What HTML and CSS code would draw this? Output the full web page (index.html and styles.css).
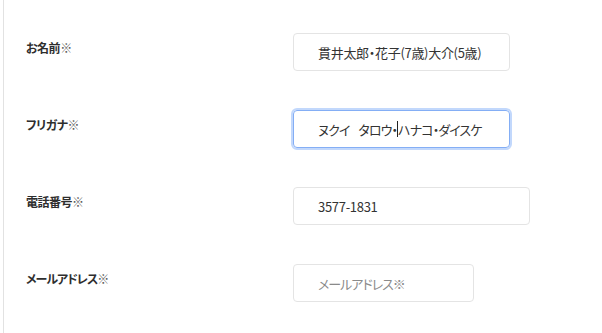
FILE: index.html
```html
<!DOCTYPE html>
<html lang="ja">
<head>
<meta charset="utf-8">
<link rel="stylesheet" href="styles.css">
</head>
<body>
<div class="page">
  <form class="form">
    <div class="row">
      <div class="label">お名前<span class="mark">※</span></div>
      <div class="field w217">貫井太郎・花子(7歳)大介(5歳)</div>
    </div>
    <div class="row">
      <div class="label">フリガナ<span class="mark">※</span></div>
      <div class="field w217 focus kana">ヌクイ<span class="gap"> </span>タロウ・<span class="caret"></span>ハナコ・ダイスケ</div>
    </div>
    <div class="row">
      <div class="label">電話番号<span class="mark">※</span></div>
      <div class="field w237">3577-1831</div>
    </div>
    <div class="row">
      <div class="label kana-label">メールアドレス<span class="mark">※</span></div>
      <div class="field w181 placeholder">メールアドレス※</div>
    </div>
  </form>
</div>
</body>
</html>
```

FILE: styles.css
```css
html, body {
  margin: 0;
  padding: 0;
  background: #fff;
}
body {
  font-family: "Noto Sans CJK JP", "Noto Sans", sans-serif;
  color: #333;
}
.page {
  margin-left: 3px;
  border-left: 1px solid #e2e2e2;
  height: 333px;
  box-sizing: border-box;
  padding: 33px 0 0 22px;
}
.form {
  display: flex;
  flex-direction: column;
  gap: 39px;
}
.row {
  display: grid;
  grid-template-columns: 267px auto;
  align-items: start;
}
.label {
  font-size: 12px;
  font-weight: bold;
  line-height: 16px;
  padding-top: 7px;
  color: #2e2e2e;
  letter-spacing: -0.5px;
  font-feature-settings: "palt";
}
.kana-label {
  letter-spacing: -1px;
}
.mark {
  color: #5a5a5a;
}
.field {
  box-sizing: border-box;
  height: 38px;
  border: 1px solid #e4e4e4;
  border-radius: 4px;
  padding: 0 0 0 24px;
  display: flex;
  align-items: center;
  font-size: 13px;
  color: #333;
  font-feature-settings: "palt";
  white-space: nowrap;
  letter-spacing: -0.3px;
}
.kana {
  letter-spacing: -0.9px;
}
.gap {
  display: inline-block;
  width: 9px;
}
.w217 { width: 217px; }
.w237 { width: 237px; }
.w181 { width: 181px; }
.focus {
  border: 1px solid #84aef5;
  box-shadow: 0 0 0 2px #c2d8fc;
}
.caret {
  display: inline-block;
  width: 1px;
  height: 16px;
  background: #222;
}
.placeholder {
  color: #8a8a8a;
  letter-spacing: -1px;
}
```
